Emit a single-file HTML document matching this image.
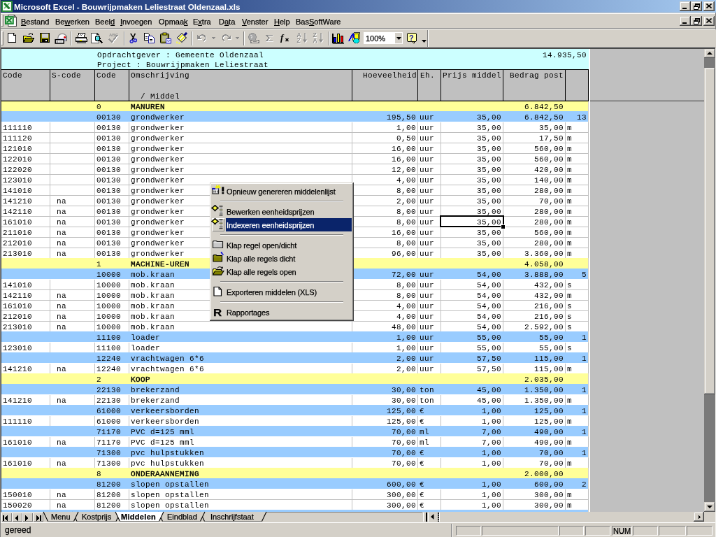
<!DOCTYPE html><html><head><meta charset="utf-8"><style>
*{margin:0;padding:0;box-sizing:border-box}
html,body{width:716px;height:537px;overflow:hidden;background:#d4d0c8}
#s{position:absolute;left:0;top:0;width:1024px;height:768px;transform:scale(0.69921875);transform-origin:0 0;will-change:transform;overflow:hidden;background:#d4d0c8;font-family:"Liberation Sans",sans-serif;font-size:11px;color:#000}
.a{position:absolute;display:block}
.m{position:absolute;font-family:"Liberation Mono",monospace;font-size:11px;letter-spacing:0.4px;white-space:pre;line-height:15px}
.r{text-align:right}
.u{position:absolute;font-family:"Liberation Sans",sans-serif;font-size:11px;white-space:pre;line-height:13px;-webkit-text-stroke:0.25px currentColor}
.bt{position:absolute;background:#d4d0c8;box-shadow:inset -1px -1px #404040,inset 1px 1px #fff,inset -2px -2px #808080}
.bt2{position:absolute;background:#d4d0c8;box-shadow:inset -1px -1px #404040,inset 1px 1px #d4d0c8,inset -2px -2px #808080,inset 2px 2px #fff}
u{text-decoration:underline;text-underline-offset:1px}
</style></head><body><div id="s">
<div class="a" style="left:0px;top:0px;width:1024px;height:18px;background:linear-gradient(to right,#0a246a,#a6caf0);"></div>
<div class="u" style="left:20px;top:3px;color:#fff;font-weight:bold;font-size:11.7px;-webkit-text-stroke:0">Microsoft Excel - Bouwrijpmaken Leliestraat Oldenzaal.xls</div>
<svg class="a" style="left:2px;top:1px;shape-rendering:auto" width="16" height="16" viewBox="0 0 16 16" shape-rendering="crispEdges"><rect x="0" y="0" width="16" height="16" fill="#2a8a3a"/><rect x="2" y="2" width="12" height="12" fill="#f2faf2"/><path d="M11.5 3.5L4 11" stroke="#5cb86a" stroke-width="1.6"/><path d="M4 3.5L11.5 11.5" stroke="#1c7a2c" stroke-width="3.2"/><rect x="3" y="12" width="10" height="1.2" fill="#ffffff"/></svg>
<div class="bt2" style="left:972px;top:2px;width:16px;height:14px"></div>
<div class="a" style="left:976px;top:11px;width:6px;height:2px;background:#000;"></div>
<div class="bt2" style="left:988px;top:2px;width:16px;height:14px"></div>
<svg class="a" style="left:992px;top:5px;" width="9" height="9" viewBox="0 0 9 9" shape-rendering="crispEdges"><path d="M2.5 3V0.5H8.5V5.5H6" fill="none" stroke="#000"/><rect x="2" y="1" width="7" height="1" fill="#000"/><rect x="0.5" y="3.5" width="6" height="5" fill="#fff" stroke="#000"/><rect x="0" y="4" width="7" height="1" fill="#000"/></svg>
<div class="bt2" style="left:1006px;top:2px;width:16px;height:14px"></div>
<svg class="a" style="left:1010px;top:5px;shape-rendering:auto" width="8" height="7" viewBox="0 0 8 7" shape-rendering="crispEdges"><path d="M0.5 0.5L7.5 6.5M7.5 0.5L0.5 6.5" stroke="#000" stroke-width="1.6"/></svg>
<div class="a" style="left:0px;top:0px;width:1px;height:768px;background:#808080;"></div>
<div class="a" style="left:1023px;top:18px;width:1px;height:24px;background:#808080;"></div>
<div class="a" style="left:1px;top:18px;width:1022px;height:1px;background:#d4d0c8;"></div>
<div class="a" style="left:1px;top:19px;width:1022px;height:1px;background:#ffffff;"></div>
<div class="a" style="left:2px;top:21px;width:1px;height:17px;background:#ffffff;"></div>
<div class="a" style="left:3px;top:21px;width:2px;height:17px;background:#d4d0c8;"></div>
<div class="a" style="left:4px;top:21px;width:1px;height:17px;background:#808080;"></div>
<div class="a" style="left:2px;top:37px;width:3px;height:1px;background:#808080;"></div>
<svg class="a" style="left:7px;top:21px;shape-rendering:auto" width="17" height="17" viewBox="0 0 16 16" shape-rendering="crispEdges"><path d="M4.5 0.5H12.5L15.5 3.5V15.5H4.5Z" fill="#fff" stroke="#404040"/><path d="M12.5 0.5V3.5H15.5" fill="none" stroke="#404040"/><rect x="0.5" y="2.5" width="11" height="10" fill="#2ea043" stroke="#178030"/><rect x="2" y="4" width="8" height="7" fill="#d8f0d8"/><path d="M2.5 4.5L9 10.5M9 4.5L2.5 10.5" stroke="#178030" stroke-width="2"/></svg>
<div class="u" style="left:30px;top:25px"><u>B</u>estand</div>
<div class="u" style="left:79px;top:25px">Be<u>w</u>erken</div>
<div class="u" style="left:136px;top:25px">Beel<u>d</u></div>
<div class="u" style="left:172px;top:25px"><u>I</u>nvoegen</div>
<div class="u" style="left:227px;top:25px">Opmaa<u>k</u></div>
<div class="u" style="left:276px;top:25px">E<u>x</u>tra</div>
<div class="u" style="left:313px;top:25px">D<u>a</u>ta</div>
<div class="u" style="left:346px;top:25px"><u>V</u>enster</div>
<div class="u" style="left:392px;top:25px"><u>H</u>elp</div>
<div class="u" style="left:423px;top:25px">Bas<u>S</u>oftWare</div>
<div class="bt2" style="left:972px;top:23px;width:16px;height:14px"></div>
<div class="a" style="left:976px;top:32px;width:6px;height:2px;background:#000;"></div>
<div class="bt2" style="left:988px;top:23px;width:16px;height:14px"></div>
<svg class="a" style="left:992px;top:26px;" width="9" height="9" viewBox="0 0 9 9" shape-rendering="crispEdges"><path d="M2.5 3V0.5H8.5V5.5H6" fill="none" stroke="#000"/><rect x="2" y="1" width="7" height="1" fill="#000"/><rect x="0.5" y="3.5" width="6" height="5" fill="#fff" stroke="#000"/><rect x="0" y="4" width="7" height="1" fill="#000"/></svg>
<div class="bt2" style="left:1006px;top:23px;width:16px;height:14px"></div>
<svg class="a" style="left:1010px;top:26px;shape-rendering:auto" width="8" height="7" viewBox="0 0 8 7" shape-rendering="crispEdges"><path d="M0.5 0.5L7.5 6.5M7.5 0.5L0.5 6.5" stroke="#000" stroke-width="1.6"/></svg>
<div class="a" style="left:1px;top:40px;width:1022px;height:1px;background:#808080;"></div>
<div class="a" style="left:1px;top:41px;width:1022px;height:1px;background:#ffffff;"></div>
<div class="a" style="left:2px;top:44px;width:1px;height:21px;background:#ffffff;"></div>
<div class="a" style="left:4px;top:44px;width:1px;height:21px;background:#808080;"></div>
<div class="a" style="left:2px;top:64px;width:3px;height:1px;background:#808080;"></div>
<div class="a" style="left:2px;top:44px;width:3px;height:1px;background:#ffffff;"></div>
<div class="a" style="left:101px;top:45px;width:1px;height:20px;background:#808080;"></div>
<div class="a" style="left:102px;top:45px;width:1px;height:20px;background:#ffffff;"></div>
<div class="a" style="left:177px;top:45px;width:1px;height:20px;background:#808080;"></div>
<div class="a" style="left:178px;top:45px;width:1px;height:20px;background:#ffffff;"></div>
<div class="a" style="left:274px;top:45px;width:1px;height:20px;background:#808080;"></div>
<div class="a" style="left:275px;top:45px;width:1px;height:20px;background:#ffffff;"></div>
<div class="a" style="left:348px;top:45px;width:1px;height:20px;background:#808080;"></div>
<div class="a" style="left:349px;top:45px;width:1px;height:20px;background:#ffffff;"></div>
<div class="a" style="left:470px;top:45px;width:1px;height:20px;background:#808080;"></div>
<div class="a" style="left:471px;top:45px;width:1px;height:20px;background:#ffffff;"></div>
<svg class="a" style="left:9px;top:46px;" width="16" height="16" viewBox="0 0 16 16" shape-rendering="crispEdges"><path d="M2.5 1.5H10.5L13.5 4.5V14.5H2.5Z" fill="#fff" stroke="#000"/><path d="M10.5 1.5V4.5H13.5" fill="none" stroke="#000"/></svg>
<svg class="a" style="left:32px;top:46px;" width="17" height="16" viewBox="0 0 17 16" shape-rendering="crispEdges"><path d="M1.5 5.5H5.5L6.5 6.5H12.5V14.5H1.5Z" fill="#ffff00" stroke="#000"/><path d="M1.5 14.5L4.5 8.5H16.5L13.5 14.5Z" fill="#808000" stroke="#000"/><path d="M9 3.5Q11 0.5 13.5 3" fill="none" stroke="#000"/><path d="M12 2H15V5Z" fill="#000"/></svg>
<svg class="a" style="left:56px;top:46px;" width="16" height="16" viewBox="0 0 16 16" shape-rendering="crispEdges"><rect x="1.5" y="1.5" width="13" height="13" fill="#808000" stroke="#000"/><rect x="3.5" y="2" width="9" height="5.5" fill="#d0d0d0"/><rect x="3.5" y="9.5" width="9" height="5" fill="#000"/><rect x="9" y="11" width="2" height="2" fill="#fff"/></svg>
<svg class="a" style="left:78px;top:46px;shape-rendering:auto" width="18" height="17" viewBox="0 0 18 17" shape-rendering="crispEdges"><path d="M5 7.5A6.2 6.2 0 0 1 17.2 7.5V12.5H5Z" fill="#f8f8f8" stroke="#888" stroke-width="1.1"/><path d="M5.6 8.8H16.6V12H5.6Z" fill="#c8c8f4"/><path d="M16.8 5V13" stroke="#606060" stroke-width="1.2"/><circle cx="14.6" cy="7.3" r="1.5" fill="#e00000"/><rect x="1.2" y="10.7" width="12" height="5.3" fill="#fff" stroke="#000" stroke-width="1.5"/><rect x="3" y="12.3" width="1.4" height="2.6" fill="#505050"/><rect x="5.5" y="12.5" width="6" height="2.2" fill="#d0d0d0"/></svg>
<svg class="a" style="left:107px;top:46px;" width="18" height="17" viewBox="0 0 18 17" shape-rendering="crispEdges"><path d="M5.5 1.5H14.5L13.5 7.5H4.5Z" fill="#fff" stroke="#000"/><path d="M7 5L9 3M9 5L11 3" stroke="#404040"/><path d="M1.5 7.5H15Q17 7.5 17 10V13.5H1.5Z" fill="#a8a8a8" stroke="#000"/><rect x="2" y="9.8" width="14" height="1.3" fill="#fff"/><rect x="6.5" y="11.2" width="3" height="2" fill="#d8d800"/><rect x="2.5" y="13.5" width="13" height="2.5" fill="#686868"/></svg>
<svg class="a" style="left:130px;top:46px;" width="18" height="17" viewBox="0 0 18 17" shape-rendering="crispEdges"><path d="M0.5 1.5H9L11 3.5V15.5H0.5Z" fill="#fff" stroke="#505050"/><path d="M9 1.5V3.5H11" fill="none" stroke="#202020" stroke-width="1.5"/><circle cx="9.6" cy="8.8" r="3.4" fill="#48d8e0" stroke="#000" stroke-width="1.3"/><circle cx="8.6" cy="7.8" r="1" fill="#d0ffff"/><path d="M12 11.3L16.5 15.5" stroke="#000" stroke-width="2"/></svg>
<svg class="a" style="left:154px;top:46px;" width="17" height="17" viewBox="0 0 17 17" shape-rendering="crispEdges"><g transform="translate(1,1)"><path d="M2 10L6 14L14 4" fill="none" stroke="#fff" stroke-width="2"/></g><path d="M2 10L6 14L14 4" fill="none" stroke="#909090" stroke-width="2"/><text x="2" y="6" font-family="Liberation Sans" font-size="6" font-weight="bold" fill="#909090">ABC</text></svg>
<svg class="a" style="left:184px;top:46px;shape-rendering:auto" width="13" height="17" viewBox="0 0 13 17" shape-rendering="crispEdges"><path d="M2.8 1.8L8.4 10.6M9.4 1.8L4.6 11.6" stroke="#000" stroke-width="1.5" fill="none"/><circle cx="4.2" cy="13.2" r="2" fill="#c0c0f0" stroke="#2828c8" stroke-width="1.4"/><circle cx="9.4" cy="11.8" r="2" fill="#c0c0f0" stroke="#2828c8" stroke-width="1.4"/></svg>
<svg class="a" style="left:205px;top:46px;" width="17" height="16" viewBox="0 0 17 16" shape-rendering="crispEdges"><path d="M1.5 1.5H6.5L8.5 3.5V11.5H1.5Z" fill="#fff" stroke="#000"/><path d="M3 6H6M3 8H6" stroke="#000"/><path d="M7.5 5.5H12.5L15.5 8.5V15.5H7.5Z" fill="#fff" stroke="#1818a0"/><path d="M9 10H13M9 12H13" stroke="#000"/></svg>
<svg class="a" style="left:228px;top:46px;shape-rendering:auto" width="18" height="17" viewBox="0 0 18 17" shape-rendering="crispEdges"><rect x="1.5" y="2.5" width="12" height="13" rx="1" fill="#808020" stroke="#000"/><rect x="3.5" y="4.5" width="8" height="9" fill="#b8b890"/><rect x="5" y="1" width="5" height="3" fill="#d8d800" stroke="#000" stroke-width="0.8"/><path d="M9.5 9.5H16.5V16H9.5Z" fill="#e8e8ff" stroke="#2020c0"/><path d="M11 12L13 13.5L15.5 11" fill="none" stroke="#2020c0"/></svg>
<svg class="a" style="left:251px;top:46px;shape-rendering:auto" width="18" height="17" viewBox="0 0 18 17" shape-rendering="crispEdges"><g transform="rotate(45 9 8)"><rect x="7.5" y="-2" width="3" height="5" fill="#000080"/><rect x="4.5" y="3.5" width="9" height="9" fill="#f4f4f4" stroke="#202020"/><rect x="6.2" y="4.2" width="1.8" height="7.8" fill="#e8e800"/><rect x="9.8" y="4.2" width="1.8" height="7.8" fill="#e8e800"/></g><rect x="1" y="13.5" width="2.5" height="2.5" fill="#f0f060"/><rect x="4.5" y="14.5" width="2.5" height="2.5" fill="#f0f060"/></svg>
<svg class="a" style="left:281px;top:48px;" width="17" height="13" viewBox="0 0 17 13" shape-rendering="crispEdges"><g transform="translate(1,1)"><path d="M4 4Q9 0 12 4Q14 8 10 10" fill="none" stroke="#fff" stroke-width="1.6"/><path d="M1 2V8H7Z" fill="#fff"/></g><path d="M4 4Q9 0 12 4Q14 8 10 10" fill="none" stroke="#8a8a8a" stroke-width="1.6"/><path d="M1 2V8H7Z" fill="#8a8a8a"/></svg>
<svg class="a" style="left:302px;top:52px;" width="7" height="5" viewBox="0 0 7 5" shape-rendering="crispEdges"><path d="M0.5 1H6.5L3.5 4Z" fill="#8a8a8a"/></svg>
<svg class="a" style="left:315px;top:48px;" width="17" height="13" viewBox="0 0 17 13" shape-rendering="crispEdges"><g transform="translate(1,1)"><path d="M12 4Q7 0 4 4Q2 8 6 10" fill="none" stroke="#fff" stroke-width="1.6"/><path d="M15 2V8H9Z" fill="#fff"/></g><path d="M12 4Q7 0 4 4Q2 8 6 10" fill="none" stroke="#8a8a8a" stroke-width="1.6"/><path d="M15 2V8H9Z" fill="#8a8a8a"/></svg>
<svg class="a" style="left:336px;top:52px;" width="7" height="5" viewBox="0 0 7 5" shape-rendering="crispEdges"><path d="M0.5 1H6.5L3.5 4Z" fill="#8a8a8a"/></svg>
<svg class="a" style="left:353px;top:46px;" width="19" height="17" viewBox="0 0 19 17" shape-rendering="crispEdges"><circle cx="8" cy="7" r="5.5" fill="#a8a8a8" stroke="#909090"/><path d="M5 4L8 6L6 9" stroke="#d8d8d8" fill="none"/><rect x="5.5" y="11.5" width="12" height="4" rx="2" fill="#d4d0c8" stroke="#808080" stroke-width="1.5"/><path d="M9 13.5H14" stroke="#808080"/></svg>
<svg class="a" style="left:379px;top:49px;" width="14" height="12" viewBox="0 0 14 12" shape-rendering="crispEdges"><g transform="translate(1,1)"><path d="M11 1.5H2L6 5.5L2 9.5H11" fill="none" stroke="#fff" stroke-width="1.3"/></g><path d="M11 1.5H2L6 5.5L2 9.5H11" fill="none" stroke="#8a8a8a" stroke-width="1.3"/></svg>
<svg class="a" style="left:400px;top:47px;shape-rendering:auto" width="16" height="15" viewBox="0 0 16 15" shape-rendering="crispEdges"><text x="1" y="11.5" font-family="Liberation Serif" font-size="13" font-style="italic" font-weight="bold" fill="#000">f</text><path d="M8.5 8L12.5 12M12.5 8L8.5 12" stroke="#000" stroke-width="1.5"/></svg>
<svg class="a" style="left:424px;top:46px;shape-rendering:auto" width="17" height="17" viewBox="0 0 17 17" shape-rendering="crispEdges"><g transform="translate(1,1)" fill="#fff" stroke="#fff"><text x="0.5" y="7.5" font-family="Liberation Sans" font-size="8.5" font-weight="bold" stroke="none">A</text><text x="0.5" y="15.5" font-family="Liberation Sans" font-size="8.5" font-weight="bold" stroke="none">Z</text><path d="M12 1V12" stroke-width="1.3" fill="none"/><path d="M9 10.5H15L12 15Z" stroke="none"/></g><g fill="#8c8c8c" stroke="#8c8c8c"><text x="0.5" y="7.5" font-family="Liberation Sans" font-size="8.5" font-weight="bold" stroke="none">A</text><text x="0.5" y="15.5" font-family="Liberation Sans" font-size="8.5" font-weight="bold" stroke="none">Z</text><path d="M12 1V12" stroke-width="1.3" fill="none"/><path d="M9 10.5H15L12 15Z" stroke="none"/></g></svg>
<svg class="a" style="left:447px;top:46px;shape-rendering:auto" width="17" height="17" viewBox="0 0 17 17" shape-rendering="crispEdges"><g transform="translate(1,1)" fill="#fff" stroke="#fff"><text x="0.5" y="7.5" font-family="Liberation Sans" font-size="8.5" font-weight="bold" stroke="none">Z</text><text x="0.5" y="15.5" font-family="Liberation Sans" font-size="8.5" font-weight="bold" stroke="none">A</text><path d="M12 1V12" stroke-width="1.3" fill="none"/><path d="M9 10.5H15L12 15Z" stroke="none"/></g><g fill="#8c8c8c" stroke="#8c8c8c"><text x="0.5" y="7.5" font-family="Liberation Sans" font-size="8.5" font-weight="bold" stroke="none">Z</text><text x="0.5" y="15.5" font-family="Liberation Sans" font-size="8.5" font-weight="bold" stroke="none">A</text><path d="M12 1V12" stroke-width="1.3" fill="none"/><path d="M9 10.5H15L12 15Z" stroke="none"/></g></svg>
<svg class="a" style="left:475px;top:46px;" width="18" height="17" viewBox="0 0 18 17" shape-rendering="crispEdges"><rect x="2.5" y="7.5" width="3" height="7" fill="#0000ff" stroke="#000"/><rect x="7.5" y="2.5" width="3" height="12" fill="#ffff00" stroke="#000"/><rect x="12.5" y="5.5" width="3" height="9" fill="#ff0000" stroke="#000"/><path d="M1 1.5V15.5H17" fill="none" stroke="#000" stroke-width="1.4"/><rect x="1" y="15" width="16" height="1.5" fill="#404040"/></svg>
<svg class="a" style="left:498px;top:46px;" width="18" height="17" viewBox="0 0 18 17" shape-rendering="crispEdges"><path d="M6.5 2.5L8.5 0.5H16.5V9.5L14.5 11.5H6.5Z" fill="#ffff00" stroke="#404040"/><path d="M6.5 2.5H14.5V11.5M14.5 2.5L16.5 0.5" fill="none" stroke="#404040"/><path d="M1 13L6 3H8L9 13" fill="none" stroke="#0000e0" stroke-width="2"/><ellipse cx="11.5" cy="12.5" rx="4" ry="3.5" fill="#00e8e8" stroke="#006060"/></svg>
<svg class="a" style="left:581px;top:46px;" width="17" height="17" viewBox="0 0 17 17" shape-rendering="crispEdges"><rect x="1.5" y="1.5" width="13" height="12" rx="2" fill="#ffffa0" stroke="#000"/><path d="M9 13.5L11 16L12 13.5" fill="#ffffa0" stroke="#000"/><text x="4" y="12" font-family="Liberation Sans" font-size="11" font-weight="bold" fill="#1010a0">?</text></svg>
<div class="a" style="left:520px;top:46px;width:56px;height:17px;background:#ffffff;"></div>
<div class="a" style="left:565px;top:47px;width:10px;height:15px;background:#d4d0c8;"></div>
<svg class="a" style="left:567px;top:53px;shape-rendering:auto" width="7" height="4" viewBox="0 0 7 4" shape-rendering="crispEdges"><path d="M0 0H7L3.5 4Z" fill="#000"/></svg>
<div class="u" style="left:523px;top:48px;font-size:11px;line-height:14px">100%</div>
<svg class="a" style="left:603px;top:57px;shape-rendering:auto" width="7" height="4" viewBox="0 0 7 4" shape-rendering="crispEdges"><path d="M0 0H7L3.5 4Z" fill="#000"/></svg>
<div class="a" style="left:611px;top:43px;width:1px;height:24px;background:#808080;"></div>
<div class="a" style="left:612px;top:43px;width:1px;height:24px;background:#ffffff;"></div>
<div class="a" style="left:1px;top:67px;width:1022px;height:1px;background:#808080;"></div>
<div class="a" style="left:1px;top:68px;width:1022px;height:1px;background:#808080;"></div>
<div class="a" style="left:1px;top:69px;width:1022px;height:1px;background:#404040;"></div>
<div class="a" style="left:1px;top:69px;width:1px;height:663px;background:#404040;"></div>
<div class="a" style="left:844px;top:70px;width:163px;height:662px;background:#c0c0c0;"></div>
<div class="a" style="left:2px;top:70px;width:840px;height:29px;background:#ccffff;"></div>
<div class="m" style="left:139px;top:72px">Opdrachtgever : Gemeente Oldenzaal</div>
<div class="m" style="left:139px;top:86px">Project : Bouwrijpmaken Leliestraat</div>
<div class="m r" style="left:600px;width:239px;top:72px">14.935,50</div>
<div class="a" style="left:2px;top:99px;width:840px;height:45px;background:#c0c0c0;"></div>
<div class="a" style="left:2px;top:99px;width:840px;height:1px;background:#000;"></div>
<div class="m" style="left:4px;top:101px">Code</div>
<div class="m" style="left:74px;top:101px">S-code</div>
<div class="m" style="left:138px;top:101px">Code</div>
<div class="m" style="left:187px;top:101px">Omschrijving</div>
<div class="m" style="left:601px;top:101px">Eh.</div>
<div class="m" style="left:633px;top:101px">Prijs middel</div>
<div class="m" style="left:729px;top:101px">Bedrag post</div>
<div class="m r" style="left:504px;width:92px;top:101px">Hoeveelheid</div>
<div class="m" style="left:187px;top:131px">  / Middel</div>
<div class="a" style="left:2px;top:144px;width:839px;height:15px;background:#ffff99;"></div>
<div class="a" style="left:2px;top:159px;width:839px;height:15px;background:#99ccff;"></div>
<div class="a" style="left:2px;top:174px;width:839px;height:15px;background:#ffffff;"></div>
<div class="a" style="left:2px;top:189px;width:839px;height:15px;background:#ffffff;"></div>
<div class="a" style="left:2px;top:204px;width:839px;height:15px;background:#ffffff;"></div>
<div class="a" style="left:2px;top:219px;width:839px;height:15px;background:#ffffff;"></div>
<div class="a" style="left:2px;top:234px;width:839px;height:15px;background:#ffffff;"></div>
<div class="a" style="left:2px;top:249px;width:839px;height:15px;background:#ffffff;"></div>
<div class="a" style="left:2px;top:264px;width:839px;height:15px;background:#ffffff;"></div>
<div class="a" style="left:2px;top:279px;width:839px;height:15px;background:#ffffff;"></div>
<div class="a" style="left:2px;top:294px;width:839px;height:15px;background:#ffffff;"></div>
<div class="a" style="left:2px;top:309px;width:839px;height:15px;background:#ffffff;"></div>
<div class="a" style="left:2px;top:324px;width:839px;height:15px;background:#ffffff;"></div>
<div class="a" style="left:2px;top:339px;width:839px;height:15px;background:#ffffff;"></div>
<div class="a" style="left:2px;top:354px;width:839px;height:15px;background:#ffffff;"></div>
<div class="a" style="left:2px;top:369px;width:839px;height:15px;background:#ffff99;"></div>
<div class="a" style="left:2px;top:384px;width:839px;height:15px;background:#99ccff;"></div>
<div class="a" style="left:2px;top:399px;width:839px;height:15px;background:#ffffff;"></div>
<div class="a" style="left:2px;top:414px;width:839px;height:15px;background:#ffffff;"></div>
<div class="a" style="left:2px;top:429px;width:839px;height:15px;background:#ffffff;"></div>
<div class="a" style="left:2px;top:444px;width:839px;height:15px;background:#ffffff;"></div>
<div class="a" style="left:2px;top:459px;width:839px;height:15px;background:#ffffff;"></div>
<div class="a" style="left:2px;top:474px;width:839px;height:15px;background:#99ccff;"></div>
<div class="a" style="left:2px;top:489px;width:839px;height:15px;background:#ffffff;"></div>
<div class="a" style="left:2px;top:504px;width:839px;height:15px;background:#99ccff;"></div>
<div class="a" style="left:2px;top:519px;width:839px;height:15px;background:#ffffff;"></div>
<div class="a" style="left:2px;top:534px;width:839px;height:15px;background:#ffff99;"></div>
<div class="a" style="left:2px;top:549px;width:839px;height:15px;background:#99ccff;"></div>
<div class="a" style="left:2px;top:564px;width:839px;height:15px;background:#ffffff;"></div>
<div class="a" style="left:2px;top:579px;width:839px;height:15px;background:#99ccff;"></div>
<div class="a" style="left:2px;top:594px;width:839px;height:15px;background:#ffffff;"></div>
<div class="a" style="left:2px;top:609px;width:839px;height:15px;background:#99ccff;"></div>
<div class="a" style="left:2px;top:624px;width:839px;height:15px;background:#ffffff;"></div>
<div class="a" style="left:2px;top:639px;width:839px;height:15px;background:#99ccff;"></div>
<div class="a" style="left:2px;top:654px;width:839px;height:15px;background:#ffffff;"></div>
<div class="a" style="left:2px;top:669px;width:839px;height:15px;background:#ffff99;"></div>
<div class="a" style="left:2px;top:684px;width:839px;height:15px;background:#99ccff;"></div>
<div class="a" style="left:2px;top:699px;width:839px;height:15px;background:#ffffff;"></div>
<div class="a" style="left:2px;top:714px;width:839px;height:15px;background:#ffffff;"></div>
<div class="a" style="left:2px;top:729px;width:839px;height:15px;background:#99ccff;"></div>
<div class="a" style="left:2px;top:189px;width:839px;height:1px;background:#c0c0c0;"></div>
<div class="a" style="left:71px;top:175px;width:1px;height:15px;background:#c0c0c0;"></div>
<div class="a" style="left:135px;top:175px;width:1px;height:15px;background:#c0c0c0;"></div>
<div class="a" style="left:184px;top:175px;width:1px;height:15px;background:#c0c0c0;"></div>
<div class="a" style="left:503px;top:175px;width:1px;height:15px;background:#c0c0c0;"></div>
<div class="a" style="left:597px;top:175px;width:1px;height:15px;background:#c0c0c0;"></div>
<div class="a" style="left:630px;top:175px;width:1px;height:15px;background:#c0c0c0;"></div>
<div class="a" style="left:719px;top:175px;width:1px;height:15px;background:#c0c0c0;"></div>
<div class="a" style="left:808px;top:175px;width:1px;height:15px;background:#c0c0c0;"></div>
<div class="a" style="left:841px;top:175px;width:1px;height:15px;background:#c0c0c0;"></div>
<div class="a" style="left:2px;top:204px;width:839px;height:1px;background:#c0c0c0;"></div>
<div class="a" style="left:71px;top:190px;width:1px;height:15px;background:#c0c0c0;"></div>
<div class="a" style="left:135px;top:190px;width:1px;height:15px;background:#c0c0c0;"></div>
<div class="a" style="left:184px;top:190px;width:1px;height:15px;background:#c0c0c0;"></div>
<div class="a" style="left:503px;top:190px;width:1px;height:15px;background:#c0c0c0;"></div>
<div class="a" style="left:597px;top:190px;width:1px;height:15px;background:#c0c0c0;"></div>
<div class="a" style="left:630px;top:190px;width:1px;height:15px;background:#c0c0c0;"></div>
<div class="a" style="left:719px;top:190px;width:1px;height:15px;background:#c0c0c0;"></div>
<div class="a" style="left:808px;top:190px;width:1px;height:15px;background:#c0c0c0;"></div>
<div class="a" style="left:841px;top:190px;width:1px;height:15px;background:#c0c0c0;"></div>
<div class="a" style="left:2px;top:219px;width:839px;height:1px;background:#c0c0c0;"></div>
<div class="a" style="left:71px;top:205px;width:1px;height:15px;background:#c0c0c0;"></div>
<div class="a" style="left:135px;top:205px;width:1px;height:15px;background:#c0c0c0;"></div>
<div class="a" style="left:184px;top:205px;width:1px;height:15px;background:#c0c0c0;"></div>
<div class="a" style="left:503px;top:205px;width:1px;height:15px;background:#c0c0c0;"></div>
<div class="a" style="left:597px;top:205px;width:1px;height:15px;background:#c0c0c0;"></div>
<div class="a" style="left:630px;top:205px;width:1px;height:15px;background:#c0c0c0;"></div>
<div class="a" style="left:719px;top:205px;width:1px;height:15px;background:#c0c0c0;"></div>
<div class="a" style="left:808px;top:205px;width:1px;height:15px;background:#c0c0c0;"></div>
<div class="a" style="left:841px;top:205px;width:1px;height:15px;background:#c0c0c0;"></div>
<div class="a" style="left:2px;top:234px;width:839px;height:1px;background:#c0c0c0;"></div>
<div class="a" style="left:71px;top:220px;width:1px;height:15px;background:#c0c0c0;"></div>
<div class="a" style="left:135px;top:220px;width:1px;height:15px;background:#c0c0c0;"></div>
<div class="a" style="left:184px;top:220px;width:1px;height:15px;background:#c0c0c0;"></div>
<div class="a" style="left:503px;top:220px;width:1px;height:15px;background:#c0c0c0;"></div>
<div class="a" style="left:597px;top:220px;width:1px;height:15px;background:#c0c0c0;"></div>
<div class="a" style="left:630px;top:220px;width:1px;height:15px;background:#c0c0c0;"></div>
<div class="a" style="left:719px;top:220px;width:1px;height:15px;background:#c0c0c0;"></div>
<div class="a" style="left:808px;top:220px;width:1px;height:15px;background:#c0c0c0;"></div>
<div class="a" style="left:841px;top:220px;width:1px;height:15px;background:#c0c0c0;"></div>
<div class="a" style="left:2px;top:249px;width:839px;height:1px;background:#c0c0c0;"></div>
<div class="a" style="left:71px;top:235px;width:1px;height:15px;background:#c0c0c0;"></div>
<div class="a" style="left:135px;top:235px;width:1px;height:15px;background:#c0c0c0;"></div>
<div class="a" style="left:184px;top:235px;width:1px;height:15px;background:#c0c0c0;"></div>
<div class="a" style="left:503px;top:235px;width:1px;height:15px;background:#c0c0c0;"></div>
<div class="a" style="left:597px;top:235px;width:1px;height:15px;background:#c0c0c0;"></div>
<div class="a" style="left:630px;top:235px;width:1px;height:15px;background:#c0c0c0;"></div>
<div class="a" style="left:719px;top:235px;width:1px;height:15px;background:#c0c0c0;"></div>
<div class="a" style="left:808px;top:235px;width:1px;height:15px;background:#c0c0c0;"></div>
<div class="a" style="left:841px;top:235px;width:1px;height:15px;background:#c0c0c0;"></div>
<div class="a" style="left:2px;top:264px;width:839px;height:1px;background:#c0c0c0;"></div>
<div class="a" style="left:71px;top:250px;width:1px;height:15px;background:#c0c0c0;"></div>
<div class="a" style="left:135px;top:250px;width:1px;height:15px;background:#c0c0c0;"></div>
<div class="a" style="left:184px;top:250px;width:1px;height:15px;background:#c0c0c0;"></div>
<div class="a" style="left:503px;top:250px;width:1px;height:15px;background:#c0c0c0;"></div>
<div class="a" style="left:597px;top:250px;width:1px;height:15px;background:#c0c0c0;"></div>
<div class="a" style="left:630px;top:250px;width:1px;height:15px;background:#c0c0c0;"></div>
<div class="a" style="left:719px;top:250px;width:1px;height:15px;background:#c0c0c0;"></div>
<div class="a" style="left:808px;top:250px;width:1px;height:15px;background:#c0c0c0;"></div>
<div class="a" style="left:841px;top:250px;width:1px;height:15px;background:#c0c0c0;"></div>
<div class="a" style="left:2px;top:279px;width:839px;height:1px;background:#c0c0c0;"></div>
<div class="a" style="left:71px;top:265px;width:1px;height:15px;background:#c0c0c0;"></div>
<div class="a" style="left:135px;top:265px;width:1px;height:15px;background:#c0c0c0;"></div>
<div class="a" style="left:184px;top:265px;width:1px;height:15px;background:#c0c0c0;"></div>
<div class="a" style="left:503px;top:265px;width:1px;height:15px;background:#c0c0c0;"></div>
<div class="a" style="left:597px;top:265px;width:1px;height:15px;background:#c0c0c0;"></div>
<div class="a" style="left:630px;top:265px;width:1px;height:15px;background:#c0c0c0;"></div>
<div class="a" style="left:719px;top:265px;width:1px;height:15px;background:#c0c0c0;"></div>
<div class="a" style="left:808px;top:265px;width:1px;height:15px;background:#c0c0c0;"></div>
<div class="a" style="left:841px;top:265px;width:1px;height:15px;background:#c0c0c0;"></div>
<div class="a" style="left:2px;top:294px;width:839px;height:1px;background:#c0c0c0;"></div>
<div class="a" style="left:71px;top:280px;width:1px;height:15px;background:#c0c0c0;"></div>
<div class="a" style="left:135px;top:280px;width:1px;height:15px;background:#c0c0c0;"></div>
<div class="a" style="left:184px;top:280px;width:1px;height:15px;background:#c0c0c0;"></div>
<div class="a" style="left:503px;top:280px;width:1px;height:15px;background:#c0c0c0;"></div>
<div class="a" style="left:597px;top:280px;width:1px;height:15px;background:#c0c0c0;"></div>
<div class="a" style="left:630px;top:280px;width:1px;height:15px;background:#c0c0c0;"></div>
<div class="a" style="left:719px;top:280px;width:1px;height:15px;background:#c0c0c0;"></div>
<div class="a" style="left:808px;top:280px;width:1px;height:15px;background:#c0c0c0;"></div>
<div class="a" style="left:841px;top:280px;width:1px;height:15px;background:#c0c0c0;"></div>
<div class="a" style="left:2px;top:309px;width:839px;height:1px;background:#c0c0c0;"></div>
<div class="a" style="left:71px;top:295px;width:1px;height:15px;background:#c0c0c0;"></div>
<div class="a" style="left:135px;top:295px;width:1px;height:15px;background:#c0c0c0;"></div>
<div class="a" style="left:184px;top:295px;width:1px;height:15px;background:#c0c0c0;"></div>
<div class="a" style="left:503px;top:295px;width:1px;height:15px;background:#c0c0c0;"></div>
<div class="a" style="left:597px;top:295px;width:1px;height:15px;background:#c0c0c0;"></div>
<div class="a" style="left:630px;top:295px;width:1px;height:15px;background:#c0c0c0;"></div>
<div class="a" style="left:719px;top:295px;width:1px;height:15px;background:#c0c0c0;"></div>
<div class="a" style="left:808px;top:295px;width:1px;height:15px;background:#c0c0c0;"></div>
<div class="a" style="left:841px;top:295px;width:1px;height:15px;background:#c0c0c0;"></div>
<div class="a" style="left:2px;top:324px;width:839px;height:1px;background:#c0c0c0;"></div>
<div class="a" style="left:71px;top:310px;width:1px;height:15px;background:#c0c0c0;"></div>
<div class="a" style="left:135px;top:310px;width:1px;height:15px;background:#c0c0c0;"></div>
<div class="a" style="left:184px;top:310px;width:1px;height:15px;background:#c0c0c0;"></div>
<div class="a" style="left:503px;top:310px;width:1px;height:15px;background:#c0c0c0;"></div>
<div class="a" style="left:597px;top:310px;width:1px;height:15px;background:#c0c0c0;"></div>
<div class="a" style="left:630px;top:310px;width:1px;height:15px;background:#c0c0c0;"></div>
<div class="a" style="left:719px;top:310px;width:1px;height:15px;background:#c0c0c0;"></div>
<div class="a" style="left:808px;top:310px;width:1px;height:15px;background:#c0c0c0;"></div>
<div class="a" style="left:841px;top:310px;width:1px;height:15px;background:#c0c0c0;"></div>
<div class="a" style="left:2px;top:339px;width:839px;height:1px;background:#c0c0c0;"></div>
<div class="a" style="left:71px;top:325px;width:1px;height:15px;background:#c0c0c0;"></div>
<div class="a" style="left:135px;top:325px;width:1px;height:15px;background:#c0c0c0;"></div>
<div class="a" style="left:184px;top:325px;width:1px;height:15px;background:#c0c0c0;"></div>
<div class="a" style="left:503px;top:325px;width:1px;height:15px;background:#c0c0c0;"></div>
<div class="a" style="left:597px;top:325px;width:1px;height:15px;background:#c0c0c0;"></div>
<div class="a" style="left:630px;top:325px;width:1px;height:15px;background:#c0c0c0;"></div>
<div class="a" style="left:719px;top:325px;width:1px;height:15px;background:#c0c0c0;"></div>
<div class="a" style="left:808px;top:325px;width:1px;height:15px;background:#c0c0c0;"></div>
<div class="a" style="left:841px;top:325px;width:1px;height:15px;background:#c0c0c0;"></div>
<div class="a" style="left:2px;top:354px;width:839px;height:1px;background:#c0c0c0;"></div>
<div class="a" style="left:71px;top:340px;width:1px;height:15px;background:#c0c0c0;"></div>
<div class="a" style="left:135px;top:340px;width:1px;height:15px;background:#c0c0c0;"></div>
<div class="a" style="left:184px;top:340px;width:1px;height:15px;background:#c0c0c0;"></div>
<div class="a" style="left:503px;top:340px;width:1px;height:15px;background:#c0c0c0;"></div>
<div class="a" style="left:597px;top:340px;width:1px;height:15px;background:#c0c0c0;"></div>
<div class="a" style="left:630px;top:340px;width:1px;height:15px;background:#c0c0c0;"></div>
<div class="a" style="left:719px;top:340px;width:1px;height:15px;background:#c0c0c0;"></div>
<div class="a" style="left:808px;top:340px;width:1px;height:15px;background:#c0c0c0;"></div>
<div class="a" style="left:841px;top:340px;width:1px;height:15px;background:#c0c0c0;"></div>
<div class="a" style="left:71px;top:355px;width:1px;height:14px;background:#c0c0c0;"></div>
<div class="a" style="left:135px;top:355px;width:1px;height:14px;background:#c0c0c0;"></div>
<div class="a" style="left:184px;top:355px;width:1px;height:14px;background:#c0c0c0;"></div>
<div class="a" style="left:503px;top:355px;width:1px;height:14px;background:#c0c0c0;"></div>
<div class="a" style="left:597px;top:355px;width:1px;height:14px;background:#c0c0c0;"></div>
<div class="a" style="left:630px;top:355px;width:1px;height:14px;background:#c0c0c0;"></div>
<div class="a" style="left:719px;top:355px;width:1px;height:14px;background:#c0c0c0;"></div>
<div class="a" style="left:808px;top:355px;width:1px;height:14px;background:#c0c0c0;"></div>
<div class="a" style="left:841px;top:355px;width:1px;height:14px;background:#c0c0c0;"></div>
<div class="a" style="left:2px;top:414px;width:839px;height:1px;background:#c0c0c0;"></div>
<div class="a" style="left:71px;top:400px;width:1px;height:15px;background:#c0c0c0;"></div>
<div class="a" style="left:135px;top:400px;width:1px;height:15px;background:#c0c0c0;"></div>
<div class="a" style="left:184px;top:400px;width:1px;height:15px;background:#c0c0c0;"></div>
<div class="a" style="left:503px;top:400px;width:1px;height:15px;background:#c0c0c0;"></div>
<div class="a" style="left:597px;top:400px;width:1px;height:15px;background:#c0c0c0;"></div>
<div class="a" style="left:630px;top:400px;width:1px;height:15px;background:#c0c0c0;"></div>
<div class="a" style="left:719px;top:400px;width:1px;height:15px;background:#c0c0c0;"></div>
<div class="a" style="left:808px;top:400px;width:1px;height:15px;background:#c0c0c0;"></div>
<div class="a" style="left:841px;top:400px;width:1px;height:15px;background:#c0c0c0;"></div>
<div class="a" style="left:2px;top:429px;width:839px;height:1px;background:#c0c0c0;"></div>
<div class="a" style="left:71px;top:415px;width:1px;height:15px;background:#c0c0c0;"></div>
<div class="a" style="left:135px;top:415px;width:1px;height:15px;background:#c0c0c0;"></div>
<div class="a" style="left:184px;top:415px;width:1px;height:15px;background:#c0c0c0;"></div>
<div class="a" style="left:503px;top:415px;width:1px;height:15px;background:#c0c0c0;"></div>
<div class="a" style="left:597px;top:415px;width:1px;height:15px;background:#c0c0c0;"></div>
<div class="a" style="left:630px;top:415px;width:1px;height:15px;background:#c0c0c0;"></div>
<div class="a" style="left:719px;top:415px;width:1px;height:15px;background:#c0c0c0;"></div>
<div class="a" style="left:808px;top:415px;width:1px;height:15px;background:#c0c0c0;"></div>
<div class="a" style="left:841px;top:415px;width:1px;height:15px;background:#c0c0c0;"></div>
<div class="a" style="left:2px;top:444px;width:839px;height:1px;background:#c0c0c0;"></div>
<div class="a" style="left:71px;top:430px;width:1px;height:15px;background:#c0c0c0;"></div>
<div class="a" style="left:135px;top:430px;width:1px;height:15px;background:#c0c0c0;"></div>
<div class="a" style="left:184px;top:430px;width:1px;height:15px;background:#c0c0c0;"></div>
<div class="a" style="left:503px;top:430px;width:1px;height:15px;background:#c0c0c0;"></div>
<div class="a" style="left:597px;top:430px;width:1px;height:15px;background:#c0c0c0;"></div>
<div class="a" style="left:630px;top:430px;width:1px;height:15px;background:#c0c0c0;"></div>
<div class="a" style="left:719px;top:430px;width:1px;height:15px;background:#c0c0c0;"></div>
<div class="a" style="left:808px;top:430px;width:1px;height:15px;background:#c0c0c0;"></div>
<div class="a" style="left:841px;top:430px;width:1px;height:15px;background:#c0c0c0;"></div>
<div class="a" style="left:2px;top:459px;width:839px;height:1px;background:#c0c0c0;"></div>
<div class="a" style="left:71px;top:445px;width:1px;height:15px;background:#c0c0c0;"></div>
<div class="a" style="left:135px;top:445px;width:1px;height:15px;background:#c0c0c0;"></div>
<div class="a" style="left:184px;top:445px;width:1px;height:15px;background:#c0c0c0;"></div>
<div class="a" style="left:503px;top:445px;width:1px;height:15px;background:#c0c0c0;"></div>
<div class="a" style="left:597px;top:445px;width:1px;height:15px;background:#c0c0c0;"></div>
<div class="a" style="left:630px;top:445px;width:1px;height:15px;background:#c0c0c0;"></div>
<div class="a" style="left:719px;top:445px;width:1px;height:15px;background:#c0c0c0;"></div>
<div class="a" style="left:808px;top:445px;width:1px;height:15px;background:#c0c0c0;"></div>
<div class="a" style="left:841px;top:445px;width:1px;height:15px;background:#c0c0c0;"></div>
<div class="a" style="left:71px;top:460px;width:1px;height:14px;background:#c0c0c0;"></div>
<div class="a" style="left:135px;top:460px;width:1px;height:14px;background:#c0c0c0;"></div>
<div class="a" style="left:184px;top:460px;width:1px;height:14px;background:#c0c0c0;"></div>
<div class="a" style="left:503px;top:460px;width:1px;height:14px;background:#c0c0c0;"></div>
<div class="a" style="left:597px;top:460px;width:1px;height:14px;background:#c0c0c0;"></div>
<div class="a" style="left:630px;top:460px;width:1px;height:14px;background:#c0c0c0;"></div>
<div class="a" style="left:719px;top:460px;width:1px;height:14px;background:#c0c0c0;"></div>
<div class="a" style="left:808px;top:460px;width:1px;height:14px;background:#c0c0c0;"></div>
<div class="a" style="left:841px;top:460px;width:1px;height:14px;background:#c0c0c0;"></div>
<div class="a" style="left:71px;top:490px;width:1px;height:14px;background:#c0c0c0;"></div>
<div class="a" style="left:135px;top:490px;width:1px;height:14px;background:#c0c0c0;"></div>
<div class="a" style="left:184px;top:490px;width:1px;height:14px;background:#c0c0c0;"></div>
<div class="a" style="left:503px;top:490px;width:1px;height:14px;background:#c0c0c0;"></div>
<div class="a" style="left:597px;top:490px;width:1px;height:14px;background:#c0c0c0;"></div>
<div class="a" style="left:630px;top:490px;width:1px;height:14px;background:#c0c0c0;"></div>
<div class="a" style="left:719px;top:490px;width:1px;height:14px;background:#c0c0c0;"></div>
<div class="a" style="left:808px;top:490px;width:1px;height:14px;background:#c0c0c0;"></div>
<div class="a" style="left:841px;top:490px;width:1px;height:14px;background:#c0c0c0;"></div>
<div class="a" style="left:71px;top:520px;width:1px;height:14px;background:#c0c0c0;"></div>
<div class="a" style="left:135px;top:520px;width:1px;height:14px;background:#c0c0c0;"></div>
<div class="a" style="left:184px;top:520px;width:1px;height:14px;background:#c0c0c0;"></div>
<div class="a" style="left:503px;top:520px;width:1px;height:14px;background:#c0c0c0;"></div>
<div class="a" style="left:597px;top:520px;width:1px;height:14px;background:#c0c0c0;"></div>
<div class="a" style="left:630px;top:520px;width:1px;height:14px;background:#c0c0c0;"></div>
<div class="a" style="left:719px;top:520px;width:1px;height:14px;background:#c0c0c0;"></div>
<div class="a" style="left:808px;top:520px;width:1px;height:14px;background:#c0c0c0;"></div>
<div class="a" style="left:841px;top:520px;width:1px;height:14px;background:#c0c0c0;"></div>
<div class="a" style="left:71px;top:565px;width:1px;height:14px;background:#c0c0c0;"></div>
<div class="a" style="left:135px;top:565px;width:1px;height:14px;background:#c0c0c0;"></div>
<div class="a" style="left:184px;top:565px;width:1px;height:14px;background:#c0c0c0;"></div>
<div class="a" style="left:503px;top:565px;width:1px;height:14px;background:#c0c0c0;"></div>
<div class="a" style="left:597px;top:565px;width:1px;height:14px;background:#c0c0c0;"></div>
<div class="a" style="left:630px;top:565px;width:1px;height:14px;background:#c0c0c0;"></div>
<div class="a" style="left:719px;top:565px;width:1px;height:14px;background:#c0c0c0;"></div>
<div class="a" style="left:808px;top:565px;width:1px;height:14px;background:#c0c0c0;"></div>
<div class="a" style="left:841px;top:565px;width:1px;height:14px;background:#c0c0c0;"></div>
<div class="a" style="left:71px;top:595px;width:1px;height:14px;background:#c0c0c0;"></div>
<div class="a" style="left:135px;top:595px;width:1px;height:14px;background:#c0c0c0;"></div>
<div class="a" style="left:184px;top:595px;width:1px;height:14px;background:#c0c0c0;"></div>
<div class="a" style="left:503px;top:595px;width:1px;height:14px;background:#c0c0c0;"></div>
<div class="a" style="left:597px;top:595px;width:1px;height:14px;background:#c0c0c0;"></div>
<div class="a" style="left:630px;top:595px;width:1px;height:14px;background:#c0c0c0;"></div>
<div class="a" style="left:719px;top:595px;width:1px;height:14px;background:#c0c0c0;"></div>
<div class="a" style="left:808px;top:595px;width:1px;height:14px;background:#c0c0c0;"></div>
<div class="a" style="left:841px;top:595px;width:1px;height:14px;background:#c0c0c0;"></div>
<div class="a" style="left:71px;top:625px;width:1px;height:14px;background:#c0c0c0;"></div>
<div class="a" style="left:135px;top:625px;width:1px;height:14px;background:#c0c0c0;"></div>
<div class="a" style="left:184px;top:625px;width:1px;height:14px;background:#c0c0c0;"></div>
<div class="a" style="left:503px;top:625px;width:1px;height:14px;background:#c0c0c0;"></div>
<div class="a" style="left:597px;top:625px;width:1px;height:14px;background:#c0c0c0;"></div>
<div class="a" style="left:630px;top:625px;width:1px;height:14px;background:#c0c0c0;"></div>
<div class="a" style="left:719px;top:625px;width:1px;height:14px;background:#c0c0c0;"></div>
<div class="a" style="left:808px;top:625px;width:1px;height:14px;background:#c0c0c0;"></div>
<div class="a" style="left:841px;top:625px;width:1px;height:14px;background:#c0c0c0;"></div>
<div class="a" style="left:71px;top:655px;width:1px;height:14px;background:#c0c0c0;"></div>
<div class="a" style="left:135px;top:655px;width:1px;height:14px;background:#c0c0c0;"></div>
<div class="a" style="left:184px;top:655px;width:1px;height:14px;background:#c0c0c0;"></div>
<div class="a" style="left:503px;top:655px;width:1px;height:14px;background:#c0c0c0;"></div>
<div class="a" style="left:597px;top:655px;width:1px;height:14px;background:#c0c0c0;"></div>
<div class="a" style="left:630px;top:655px;width:1px;height:14px;background:#c0c0c0;"></div>
<div class="a" style="left:719px;top:655px;width:1px;height:14px;background:#c0c0c0;"></div>
<div class="a" style="left:808px;top:655px;width:1px;height:14px;background:#c0c0c0;"></div>
<div class="a" style="left:841px;top:655px;width:1px;height:14px;background:#c0c0c0;"></div>
<div class="a" style="left:2px;top:714px;width:839px;height:1px;background:#c0c0c0;"></div>
<div class="a" style="left:71px;top:700px;width:1px;height:15px;background:#c0c0c0;"></div>
<div class="a" style="left:135px;top:700px;width:1px;height:15px;background:#c0c0c0;"></div>
<div class="a" style="left:184px;top:700px;width:1px;height:15px;background:#c0c0c0;"></div>
<div class="a" style="left:503px;top:700px;width:1px;height:15px;background:#c0c0c0;"></div>
<div class="a" style="left:597px;top:700px;width:1px;height:15px;background:#c0c0c0;"></div>
<div class="a" style="left:630px;top:700px;width:1px;height:15px;background:#c0c0c0;"></div>
<div class="a" style="left:719px;top:700px;width:1px;height:15px;background:#c0c0c0;"></div>
<div class="a" style="left:808px;top:700px;width:1px;height:15px;background:#c0c0c0;"></div>
<div class="a" style="left:841px;top:700px;width:1px;height:15px;background:#c0c0c0;"></div>
<div class="a" style="left:71px;top:715px;width:1px;height:14px;background:#c0c0c0;"></div>
<div class="a" style="left:135px;top:715px;width:1px;height:14px;background:#c0c0c0;"></div>
<div class="a" style="left:184px;top:715px;width:1px;height:14px;background:#c0c0c0;"></div>
<div class="a" style="left:503px;top:715px;width:1px;height:14px;background:#c0c0c0;"></div>
<div class="a" style="left:597px;top:715px;width:1px;height:14px;background:#c0c0c0;"></div>
<div class="a" style="left:630px;top:715px;width:1px;height:14px;background:#c0c0c0;"></div>
<div class="a" style="left:719px;top:715px;width:1px;height:14px;background:#c0c0c0;"></div>
<div class="a" style="left:808px;top:715px;width:1px;height:14px;background:#c0c0c0;"></div>
<div class="a" style="left:841px;top:715px;width:1px;height:14px;background:#c0c0c0;"></div>
<div class="m" style="left:138px;top:146px;">0</div>
<div class="m" style="left:187px;top:146px;-webkit-text-stroke:0.4px #000;">MANUREN</div>
<div class="m r" style="left:719px;width:87px;top:146px;">6.842,50</div>
<div class="m" style="left:138px;top:161px;">00130</div>
<div class="m" style="left:187px;top:161px;">grondwerker</div>
<div class="m r" style="left:503px;width:92px;top:161px;">195,50</div>
<div class="m" style="left:600px;top:161px;">uur</div>
<div class="m r" style="left:630px;width:87px;top:161px;">35,00</div>
<div class="m r" style="left:719px;width:87px;top:161px;">6.842,50</div>
<div class="m r" style="left:808px;width:31px;top:161px;">13</div>
<div class="m" style="left:4px;top:176px;">111110</div>
<div class="m" style="left:138px;top:176px;">00130</div>
<div class="m" style="left:187px;top:176px;">grondwerker</div>
<div class="m r" style="left:503px;width:92px;top:176px;">1,00</div>
<div class="m" style="left:600px;top:176px;">uur</div>
<div class="m r" style="left:630px;width:87px;top:176px;">35,00</div>
<div class="m r" style="left:719px;width:87px;top:176px;">35,00</div>
<div class="m" style="left:811px;top:176px;">m</div>
<div class="m" style="left:4px;top:191px;">111120</div>
<div class="m" style="left:138px;top:191px;">00130</div>
<div class="m" style="left:187px;top:191px;">grondwerker</div>
<div class="m r" style="left:503px;width:92px;top:191px;">0,50</div>
<div class="m" style="left:600px;top:191px;">uur</div>
<div class="m r" style="left:630px;width:87px;top:191px;">35,00</div>
<div class="m r" style="left:719px;width:87px;top:191px;">17,50</div>
<div class="m" style="left:811px;top:191px;">m</div>
<div class="m" style="left:4px;top:206px;">121010</div>
<div class="m" style="left:138px;top:206px;">00130</div>
<div class="m" style="left:187px;top:206px;">grondwerker</div>
<div class="m r" style="left:503px;width:92px;top:206px;">16,00</div>
<div class="m" style="left:600px;top:206px;">uur</div>
<div class="m r" style="left:630px;width:87px;top:206px;">35,00</div>
<div class="m r" style="left:719px;width:87px;top:206px;">560,00</div>
<div class="m" style="left:811px;top:206px;">m</div>
<div class="m" style="left:4px;top:221px;">122010</div>
<div class="m" style="left:138px;top:221px;">00130</div>
<div class="m" style="left:187px;top:221px;">grondwerker</div>
<div class="m r" style="left:503px;width:92px;top:221px;">16,00</div>
<div class="m" style="left:600px;top:221px;">uur</div>
<div class="m r" style="left:630px;width:87px;top:221px;">35,00</div>
<div class="m r" style="left:719px;width:87px;top:221px;">560,00</div>
<div class="m" style="left:811px;top:221px;">m</div>
<div class="m" style="left:4px;top:236px;">122020</div>
<div class="m" style="left:138px;top:236px;">00130</div>
<div class="m" style="left:187px;top:236px;">grondwerker</div>
<div class="m r" style="left:503px;width:92px;top:236px;">12,00</div>
<div class="m" style="left:600px;top:236px;">uur</div>
<div class="m r" style="left:630px;width:87px;top:236px;">35,00</div>
<div class="m r" style="left:719px;width:87px;top:236px;">420,00</div>
<div class="m" style="left:811px;top:236px;">m</div>
<div class="m" style="left:4px;top:251px;">123010</div>
<div class="m" style="left:138px;top:251px;">00130</div>
<div class="m" style="left:187px;top:251px;">grondwerker</div>
<div class="m r" style="left:503px;width:92px;top:251px;">4,00</div>
<div class="m" style="left:600px;top:251px;">uur</div>
<div class="m r" style="left:630px;width:87px;top:251px;">35,00</div>
<div class="m r" style="left:719px;width:87px;top:251px;">140,00</div>
<div class="m" style="left:811px;top:251px;">m</div>
<div class="m" style="left:4px;top:266px;">141010</div>
<div class="m" style="left:138px;top:266px;">00130</div>
<div class="m" style="left:187px;top:266px;">grondwerker</div>
<div class="m r" style="left:503px;width:92px;top:266px;">8,00</div>
<div class="m" style="left:600px;top:266px;">uur</div>
<div class="m r" style="left:630px;width:87px;top:266px;">35,00</div>
<div class="m r" style="left:719px;width:87px;top:266px;">280,00</div>
<div class="m" style="left:811px;top:266px;">m</div>
<div class="m" style="left:4px;top:281px;">141210</div>
<div class="m" style="left:81px;top:281px;">na</div>
<div class="m" style="left:138px;top:281px;">00130</div>
<div class="m" style="left:187px;top:281px;">grondwerker</div>
<div class="m r" style="left:503px;width:92px;top:281px;">2,00</div>
<div class="m" style="left:600px;top:281px;">uur</div>
<div class="m r" style="left:630px;width:87px;top:281px;">35,00</div>
<div class="m r" style="left:719px;width:87px;top:281px;">70,00</div>
<div class="m" style="left:811px;top:281px;">m</div>
<div class="m" style="left:4px;top:296px;">142110</div>
<div class="m" style="left:81px;top:296px;">na</div>
<div class="m" style="left:138px;top:296px;">00130</div>
<div class="m" style="left:187px;top:296px;">grondwerker</div>
<div class="m r" style="left:503px;width:92px;top:296px;">8,00</div>
<div class="m" style="left:600px;top:296px;">uur</div>
<div class="m r" style="left:630px;width:87px;top:296px;">35,00</div>
<div class="m r" style="left:719px;width:87px;top:296px;">280,00</div>
<div class="m" style="left:811px;top:296px;">m</div>
<div class="m" style="left:4px;top:311px;">161010</div>
<div class="m" style="left:81px;top:311px;">na</div>
<div class="m" style="left:138px;top:311px;">00130</div>
<div class="m" style="left:187px;top:311px;">grondwerker</div>
<div class="m r" style="left:503px;width:92px;top:311px;">8,00</div>
<div class="m" style="left:600px;top:311px;">uur</div>
<div class="m r" style="left:630px;width:87px;top:311px;">35,00</div>
<div class="m r" style="left:719px;width:87px;top:311px;">280,00</div>
<div class="m" style="left:811px;top:311px;">m</div>
<div class="m" style="left:4px;top:326px;">211010</div>
<div class="m" style="left:81px;top:326px;">na</div>
<div class="m" style="left:138px;top:326px;">00130</div>
<div class="m" style="left:187px;top:326px;">grondwerker</div>
<div class="m r" style="left:503px;width:92px;top:326px;">16,00</div>
<div class="m" style="left:600px;top:326px;">uur</div>
<div class="m r" style="left:630px;width:87px;top:326px;">35,00</div>
<div class="m r" style="left:719px;width:87px;top:326px;">560,00</div>
<div class="m" style="left:811px;top:326px;">m</div>
<div class="m" style="left:4px;top:341px;">212010</div>
<div class="m" style="left:81px;top:341px;">na</div>
<div class="m" style="left:138px;top:341px;">00130</div>
<div class="m" style="left:187px;top:341px;">grondwerker</div>
<div class="m r" style="left:503px;width:92px;top:341px;">8,00</div>
<div class="m" style="left:600px;top:341px;">uur</div>
<div class="m r" style="left:630px;width:87px;top:341px;">35,00</div>
<div class="m r" style="left:719px;width:87px;top:341px;">280,00</div>
<div class="m" style="left:811px;top:341px;">m</div>
<div class="m" style="left:4px;top:356px;">213010</div>
<div class="m" style="left:81px;top:356px;">na</div>
<div class="m" style="left:138px;top:356px;">00130</div>
<div class="m" style="left:187px;top:356px;">grondwerker</div>
<div class="m r" style="left:503px;width:92px;top:356px;">96,00</div>
<div class="m" style="left:600px;top:356px;">uur</div>
<div class="m r" style="left:630px;width:87px;top:356px;">35,00</div>
<div class="m r" style="left:719px;width:87px;top:356px;">3.360,00</div>
<div class="m" style="left:811px;top:356px;">m</div>
<div class="m" style="left:138px;top:371px;">1</div>
<div class="m" style="left:187px;top:371px;-webkit-text-stroke:0.4px #000;">MACHINE-UREN</div>
<div class="m r" style="left:719px;width:87px;top:371px;">4.058,00</div>
<div class="m" style="left:138px;top:386px;">10000</div>
<div class="m" style="left:187px;top:386px;">mob.kraan</div>
<div class="m r" style="left:503px;width:92px;top:386px;">72,00</div>
<div class="m" style="left:600px;top:386px;">uur</div>
<div class="m r" style="left:630px;width:87px;top:386px;">54,00</div>
<div class="m r" style="left:719px;width:87px;top:386px;">3.888,00</div>
<div class="m r" style="left:808px;width:31px;top:386px;">5</div>
<div class="m" style="left:4px;top:401px;">141010</div>
<div class="m" style="left:138px;top:401px;">10000</div>
<div class="m" style="left:187px;top:401px;">mob.kraan</div>
<div class="m r" style="left:503px;width:92px;top:401px;">8,00</div>
<div class="m" style="left:600px;top:401px;">uur</div>
<div class="m r" style="left:630px;width:87px;top:401px;">54,00</div>
<div class="m r" style="left:719px;width:87px;top:401px;">432,00</div>
<div class="m" style="left:811px;top:401px;">s</div>
<div class="m" style="left:4px;top:416px;">142110</div>
<div class="m" style="left:81px;top:416px;">na</div>
<div class="m" style="left:138px;top:416px;">10000</div>
<div class="m" style="left:187px;top:416px;">mob.kraan</div>
<div class="m r" style="left:503px;width:92px;top:416px;">8,00</div>
<div class="m" style="left:600px;top:416px;">uur</div>
<div class="m r" style="left:630px;width:87px;top:416px;">54,00</div>
<div class="m r" style="left:719px;width:87px;top:416px;">432,00</div>
<div class="m" style="left:811px;top:416px;">m</div>
<div class="m" style="left:4px;top:431px;">161010</div>
<div class="m" style="left:81px;top:431px;">na</div>
<div class="m" style="left:138px;top:431px;">10000</div>
<div class="m" style="left:187px;top:431px;">mob.kraan</div>
<div class="m r" style="left:503px;width:92px;top:431px;">4,00</div>
<div class="m" style="left:600px;top:431px;">uur</div>
<div class="m r" style="left:630px;width:87px;top:431px;">54,00</div>
<div class="m r" style="left:719px;width:87px;top:431px;">216,00</div>
<div class="m" style="left:811px;top:431px;">s</div>
<div class="m" style="left:4px;top:446px;">212010</div>
<div class="m" style="left:81px;top:446px;">na</div>
<div class="m" style="left:138px;top:446px;">10000</div>
<div class="m" style="left:187px;top:446px;">mob.kraan</div>
<div class="m r" style="left:503px;width:92px;top:446px;">4,00</div>
<div class="m" style="left:600px;top:446px;">uur</div>
<div class="m r" style="left:630px;width:87px;top:446px;">54,00</div>
<div class="m r" style="left:719px;width:87px;top:446px;">216,00</div>
<div class="m" style="left:811px;top:446px;">s</div>
<div class="m" style="left:4px;top:461px;">213010</div>
<div class="m" style="left:81px;top:461px;">na</div>
<div class="m" style="left:138px;top:461px;">10000</div>
<div class="m" style="left:187px;top:461px;">mob.kraan</div>
<div class="m r" style="left:503px;width:92px;top:461px;">48,00</div>
<div class="m" style="left:600px;top:461px;">uur</div>
<div class="m r" style="left:630px;width:87px;top:461px;">54,00</div>
<div class="m r" style="left:719px;width:87px;top:461px;">2.592,00</div>
<div class="m" style="left:811px;top:461px;">s</div>
<div class="m" style="left:138px;top:476px;">11100</div>
<div class="m" style="left:187px;top:476px;">loader</div>
<div class="m r" style="left:503px;width:92px;top:476px;">1,00</div>
<div class="m" style="left:600px;top:476px;">uur</div>
<div class="m r" style="left:630px;width:87px;top:476px;">55,00</div>
<div class="m r" style="left:719px;width:87px;top:476px;">55,00</div>
<div class="m r" style="left:808px;width:31px;top:476px;">1</div>
<div class="m" style="left:4px;top:491px;">123010</div>
<div class="m" style="left:138px;top:491px;">11100</div>
<div class="m" style="left:187px;top:491px;">loader</div>
<div class="m r" style="left:503px;width:92px;top:491px;">1,00</div>
<div class="m" style="left:600px;top:491px;">uur</div>
<div class="m r" style="left:630px;width:87px;top:491px;">55,00</div>
<div class="m r" style="left:719px;width:87px;top:491px;">55,00</div>
<div class="m" style="left:811px;top:491px;">s</div>
<div class="m" style="left:138px;top:506px;">12240</div>
<div class="m" style="left:187px;top:506px;">vrachtwagen 6*6</div>
<div class="m r" style="left:503px;width:92px;top:506px;">2,00</div>
<div class="m" style="left:600px;top:506px;">uur</div>
<div class="m r" style="left:630px;width:87px;top:506px;">57,50</div>
<div class="m r" style="left:719px;width:87px;top:506px;">115,00</div>
<div class="m r" style="left:808px;width:31px;top:506px;">1</div>
<div class="m" style="left:4px;top:521px;">141210</div>
<div class="m" style="left:81px;top:521px;">na</div>
<div class="m" style="left:138px;top:521px;">12240</div>
<div class="m" style="left:187px;top:521px;">vrachtwagen 6*6</div>
<div class="m r" style="left:503px;width:92px;top:521px;">2,00</div>
<div class="m" style="left:600px;top:521px;">uur</div>
<div class="m r" style="left:630px;width:87px;top:521px;">57,50</div>
<div class="m r" style="left:719px;width:87px;top:521px;">115,00</div>
<div class="m" style="left:811px;top:521px;">m</div>
<div class="m" style="left:138px;top:536px;">2</div>
<div class="m" style="left:187px;top:536px;-webkit-text-stroke:0.4px #000;">KOOP</div>
<div class="m r" style="left:719px;width:87px;top:536px;">2.035,00</div>
<div class="m" style="left:138px;top:551px;">22130</div>
<div class="m" style="left:187px;top:551px;">brekerzand</div>
<div class="m r" style="left:503px;width:92px;top:551px;">30,00</div>
<div class="m" style="left:600px;top:551px;">ton</div>
<div class="m r" style="left:630px;width:87px;top:551px;">45,00</div>
<div class="m r" style="left:719px;width:87px;top:551px;">1.350,00</div>
<div class="m r" style="left:808px;width:31px;top:551px;">1</div>
<div class="m" style="left:4px;top:566px;">141210</div>
<div class="m" style="left:81px;top:566px;">na</div>
<div class="m" style="left:138px;top:566px;">22130</div>
<div class="m" style="left:187px;top:566px;">brekerzand</div>
<div class="m r" style="left:503px;width:92px;top:566px;">30,00</div>
<div class="m" style="left:600px;top:566px;">ton</div>
<div class="m r" style="left:630px;width:87px;top:566px;">45,00</div>
<div class="m r" style="left:719px;width:87px;top:566px;">1.350,00</div>
<div class="m" style="left:811px;top:566px;">m</div>
<div class="m" style="left:138px;top:581px;">61000</div>
<div class="m" style="left:187px;top:581px;">verkeersborden</div>
<div class="m r" style="left:503px;width:92px;top:581px;">125,00</div>
<div class="m" style="left:600px;top:581px;">€</div>
<div class="m r" style="left:630px;width:87px;top:581px;">1,00</div>
<div class="m r" style="left:719px;width:87px;top:581px;">125,00</div>
<div class="m r" style="left:808px;width:31px;top:581px;">1</div>
<div class="m" style="left:4px;top:596px;">111110</div>
<div class="m" style="left:138px;top:596px;">61000</div>
<div class="m" style="left:187px;top:596px;">verkeersborden</div>
<div class="m r" style="left:503px;width:92px;top:596px;">125,00</div>
<div class="m" style="left:600px;top:596px;">€</div>
<div class="m r" style="left:630px;width:87px;top:596px;">1,00</div>
<div class="m r" style="left:719px;width:87px;top:596px;">125,00</div>
<div class="m" style="left:811px;top:596px;">m</div>
<div class="m" style="left:138px;top:611px;">71170</div>
<div class="m" style="left:187px;top:611px;">PVC d=125 mml</div>
<div class="m r" style="left:503px;width:92px;top:611px;">70,00</div>
<div class="m" style="left:600px;top:611px;">ml</div>
<div class="m r" style="left:630px;width:87px;top:611px;">7,00</div>
<div class="m r" style="left:719px;width:87px;top:611px;">490,00</div>
<div class="m r" style="left:808px;width:31px;top:611px;">1</div>
<div class="m" style="left:4px;top:626px;">161010</div>
<div class="m" style="left:81px;top:626px;">na</div>
<div class="m" style="left:138px;top:626px;">71170</div>
<div class="m" style="left:187px;top:626px;">PVC d=125 mml</div>
<div class="m r" style="left:503px;width:92px;top:626px;">70,00</div>
<div class="m" style="left:600px;top:626px;">ml</div>
<div class="m r" style="left:630px;width:87px;top:626px;">7,00</div>
<div class="m r" style="left:719px;width:87px;top:626px;">490,00</div>
<div class="m" style="left:811px;top:626px;">m</div>
<div class="m" style="left:138px;top:641px;">71300</div>
<div class="m" style="left:187px;top:641px;">pvc hulpstukken</div>
<div class="m r" style="left:503px;width:92px;top:641px;">70,00</div>
<div class="m" style="left:600px;top:641px;">€</div>
<div class="m r" style="left:630px;width:87px;top:641px;">1,00</div>
<div class="m r" style="left:719px;width:87px;top:641px;">70,00</div>
<div class="m r" style="left:808px;width:31px;top:641px;">1</div>
<div class="m" style="left:4px;top:656px;">161010</div>
<div class="m" style="left:81px;top:656px;">na</div>
<div class="m" style="left:138px;top:656px;">71300</div>
<div class="m" style="left:187px;top:656px;">pvc hulpstukken</div>
<div class="m r" style="left:503px;width:92px;top:656px;">70,00</div>
<div class="m" style="left:600px;top:656px;">€</div>
<div class="m r" style="left:630px;width:87px;top:656px;">1,00</div>
<div class="m r" style="left:719px;width:87px;top:656px;">70,00</div>
<div class="m" style="left:811px;top:656px;">m</div>
<div class="m" style="left:138px;top:671px;">8</div>
<div class="m" style="left:187px;top:671px;-webkit-text-stroke:0.4px #000;">ONDERAANNEMING</div>
<div class="m r" style="left:719px;width:87px;top:671px;">2.000,00</div>
<div class="m" style="left:138px;top:686px;">81200</div>
<div class="m" style="left:187px;top:686px;">slopen opstallen</div>
<div class="m r" style="left:503px;width:92px;top:686px;">600,00</div>
<div class="m" style="left:600px;top:686px;">€</div>
<div class="m r" style="left:630px;width:87px;top:686px;">1,00</div>
<div class="m r" style="left:719px;width:87px;top:686px;">600,00</div>
<div class="m r" style="left:808px;width:31px;top:686px;">2</div>
<div class="m" style="left:4px;top:701px;">150010</div>
<div class="m" style="left:81px;top:701px;">na</div>
<div class="m" style="left:138px;top:701px;">81200</div>
<div class="m" style="left:187px;top:701px;">slopen opstallen</div>
<div class="m r" style="left:503px;width:92px;top:701px;">300,00</div>
<div class="m" style="left:600px;top:701px;">€</div>
<div class="m r" style="left:630px;width:87px;top:701px;">1,00</div>
<div class="m r" style="left:719px;width:87px;top:701px;">300,00</div>
<div class="m" style="left:811px;top:701px;">m</div>
<div class="m" style="left:4px;top:716px;">150020</div>
<div class="m" style="left:81px;top:716px;">na</div>
<div class="m" style="left:138px;top:716px;">81200</div>
<div class="m" style="left:187px;top:716px;">slopen opstallen</div>
<div class="m r" style="left:503px;width:92px;top:716px;">300,00</div>
<div class="m" style="left:600px;top:716px;">€</div>
<div class="m r" style="left:630px;width:87px;top:716px;">1,00</div>
<div class="m r" style="left:719px;width:87px;top:716px;">300,00</div>
<div class="m" style="left:811px;top:716px;">m</div>
<div class="a" style="left:2px;top:143px;width:840px;height:1px;background:#909090;"></div>
<div class="a" style="left:2px;top:144px;width:840px;height:1px;background:#000;"></div>
<div class="a" style="left:844px;top:143px;width:163px;height:1px;background:#a0a0a0;"></div>
<div class="a" style="left:844px;top:144px;width:163px;height:1px;background:#606060;"></div>
<div class="a" style="left:71px;top:99px;width:1px;height:46px;background:#000;"></div>
<div class="a" style="left:135px;top:99px;width:1px;height:46px;background:#000;"></div>
<div class="a" style="left:184px;top:99px;width:1px;height:46px;background:#000;"></div>
<div class="a" style="left:503px;top:99px;width:1px;height:46px;background:#000;"></div>
<div class="a" style="left:597px;top:99px;width:1px;height:46px;background:#000;"></div>
<div class="a" style="left:630px;top:99px;width:1px;height:46px;background:#000;"></div>
<div class="a" style="left:719px;top:99px;width:1px;height:46px;background:#000;"></div>
<div class="a" style="left:808px;top:99px;width:1px;height:46px;background:#000;"></div>
<div class="a" style="left:841px;top:99px;width:1px;height:46px;background:#000;"></div>
<div class="a" style="left:842px;top:70px;width:2px;height:662px;background:#ffffff;"></div>
<div class="a" style="left:629px;top:308px;width:92px;height:17px;border:2px solid #000"></div>
<div class="a" style="left:716px;top:321px;width:7px;height:7px;background:#000;border:1px solid #fff"></div>
<div class="a" style="left:1007px;top:70px;width:17px;height:662px;background:#d4d0c8;"></div>
<div style="position:absolute;background:#d4d0c8;box-shadow:inset -1px -1px #5a5a5a,inset 1px 1px #d4d0c8,inset -2px -2px #a0a0a0,inset 2px 2px #fff;left:1007px;top:70px;width:16px;height:13px"></div>
<svg class="a" style="left:1011px;top:74px;shape-rendering:auto" width="8" height="4" viewBox="0 0 8 4" shape-rendering="crispEdges"><path d="M0 4H8L4 0Z" fill="#000"/></svg>
<div class="a" style="left:1007px;top:83px;width:16px;height:14px;background:#7a7a7a;"></div>
<div style="position:absolute;background:#d4d0c8;box-shadow:inset -1px -1px #5a5a5a,inset 1px 1px #d4d0c8,inset -2px -2px #a0a0a0,inset 2px 2px #fff;left:1007px;top:97px;width:16px;height:467px"></div>
<div class="a" style="left:1007px;top:564px;width:16px;height:154px;background:#7a7a7a;"></div>
<div style="position:absolute;background:#d4d0c8;box-shadow:inset -1px -1px #5a5a5a,inset 1px 1px #d4d0c8,inset -2px -2px #a0a0a0,inset 2px 2px #fff;left:1007px;top:718px;width:16px;height:14px"></div>
<svg class="a" style="left:1011px;top:723px;shape-rendering:auto" width="8" height="4" viewBox="0 0 8 4" shape-rendering="crispEdges"><path d="M0 0H8L4 4Z" fill="#000"/></svg>
<div class="a" style="left:1023px;top:69px;width:1px;height:699px;background:#f4f4f0;"></div>
<div class="a" style="left:1px;top:732px;width:1006px;height:14px;background:#d4d0c8;"></div>
<div class="a" style="left:2px;top:733px;width:15px;height:13px;box-shadow:inset 1px 1px #fff,inset -1px -1px #808080"></div>
<div class="a" style="left:17px;top:733px;width:15px;height:13px;box-shadow:inset 1px 1px #fff,inset -1px -1px #808080"></div>
<div class="a" style="left:32px;top:733px;width:15px;height:13px;box-shadow:inset 1px 1px #fff,inset -1px -1px #808080"></div>
<div class="a" style="left:47px;top:733px;width:15px;height:13px;box-shadow:inset 1px 1px #fff,inset -1px -1px #808080"></div>
<svg class="a" style="left:3px;top:737px;" width="9" height="8" viewBox="0 0 9 8" shape-rendering="crispEdges"><rect x="1" y="0" width="1.6" height="8" fill="#000"/><path d="M8 0V8L3 4Z" fill="#000"/></svg>
<svg class="a" style="left:21px;top:737px;" width="6" height="8" viewBox="0 0 6 8" shape-rendering="crispEdges"><path d="M5 0V8L0.5 4Z" fill="#000"/></svg>
<svg class="a" style="left:35px;top:737px;" width="6" height="8" viewBox="0 0 6 8" shape-rendering="crispEdges"><path d="M1 0V8L5.5 4Z" fill="#000"/></svg>
<svg class="a" style="left:51px;top:737px;" width="9" height="8" viewBox="0 0 9 8" shape-rendering="crispEdges"><rect x="6.4" y="0" width="1.6" height="8" fill="#000"/><path d="M1 0V8L6 4Z" fill="#000"/></svg>
<div class="a" style="left:62px;top:732px;width:550px;height:1px;background:#808080;"></div>
<svg class="a" style="left:0;top:0" width="620" height="768" viewBox="0 0 620 768"><path d="M286 732L292.5 745.5H374.5L381 732Z" fill="#d4d0c8"/><path d="M292.5 745.5H374.5" stroke="#808080" fill="none"/><path d="M286 732L292.5 745.5M374.5 745.5L381 732" stroke="#000" fill="none" stroke-width="1.1"/><path d="M226 732L232.5 745.5H286.5L293 732Z" fill="#d4d0c8"/><path d="M232.5 745.5H286.5" stroke="#808080" fill="none"/><path d="M226 732L232.5 745.5M286.5 745.5L293 732" stroke="#000" fill="none" stroke-width="1.1"/><path d="M103.5 732L110.0 745.5H166.0L172.5 732Z" fill="#d4d0c8"/><path d="M110.0 745.5H166.0" stroke="#808080" fill="none"/><path d="M103.5 732L110.0 745.5M166.0 745.5L172.5 732" stroke="#000" fill="none" stroke-width="1.1"/><path d="M62 732L68.5 745.5H105.5L112 732Z" fill="#d4d0c8"/><path d="M68.5 745.5H105.5" stroke="#808080" fill="none"/><path d="M62 732L68.5 745.5M105.5 745.5L112 732" stroke="#000" fill="none" stroke-width="1.1"/><path d="M165 732L171.5 745.5H227.5L234 732Z" fill="#fff"/><path d="M171.5 745.5H227.5" stroke="#808080" fill="none"/><path d="M165 732L171.5 745.5M227.5 745.5L234 732" stroke="#000" fill="none" stroke-width="1.1"/></svg>
<div class="u" style="left:73px;top:733px;">Menu</div>
<div class="u" style="left:117px;top:733px;">Kostprijs</div>
<div class="u" style="left:173px;top:733px;font-weight:bold;letter-spacing:0.3px;">Middelen</div>
<div class="u" style="left:239px;top:733px;">Eindblad</div>
<div class="u" style="left:301px;top:733px;">Inschrijfstaat</div>
<div class="a" style="left:604px;top:732px;width:24px;height:14px;background:#d4d0c8;"></div>
<div class="a" style="left:605px;top:733px;width:1px;height:13px;background:#ffffff;"></div>
<div class="a" style="left:609px;top:733px;width:2px;height:13px;background:#000;"></div>
<div class="a" style="left:612px;top:733px;width:1px;height:13px;background:#ffffff;"></div>
<svg class="a" style="left:616px;top:735px;shape-rendering:auto" width="5" height="8" viewBox="0 0 5 8" shape-rendering="crispEdges"><path d="M4.5 0V8L0 4Z" fill="#000"/></svg>
<div class="a" style="left:626px;top:733px;width:2px;height:13px;background:repeating-linear-gradient(#202020 0 2px,#909090 2px 3px)"></div>
<div class="a" style="left:628px;top:733px;width:1px;height:13px;background:#ffffff;"></div>
<div class="a" style="left:629px;top:732px;width:363px;height:14px;background:#d4d0c8;"></div>
<div class="bt2" style="left:992px;top:732px;width:15px;height:14px"></div>
<svg class="a" style="left:998px;top:736px;" width="5" height="7" viewBox="0 0 5 7" shape-rendering="crispEdges"><path d="M0.5 0V7L4.5 3.5Z" fill="#000"/></svg>
<div class="a" style="left:1px;top:746px;width:1022px;height:1px;background:#d4d0c8;"></div>
<div class="a" style="left:1px;top:747px;width:1022px;height:1px;background:#ffffff;"></div>
<div class="u" style="left:7px;top:751px;font-size:12px;line-height:14px">gereed</div>
<div class="a" style="left:645px;top:749px;width:1px;height:19px;background:#808080;"></div>
<div class="a" style="left:646px;top:749px;width:1px;height:19px;background:#ffffff;"></div>
<div class="a" style="left:652px;top:752px;width:36px;height:14px;border:1px solid;border-color:#808080 #fff #fff #808080"></div>
<div class="a" style="left:689px;top:752px;width:110px;height:14px;border:1px solid;border-color:#808080 #fff #fff #808080"></div>
<div class="a" style="left:800px;top:752px;width:35px;height:14px;border:1px solid;border-color:#808080 #fff #fff #808080"></div>
<div class="a" style="left:837px;top:752px;width:36px;height:14px;border:1px solid;border-color:#808080 #fff #fff #808080"></div>
<div class="a" style="left:875px;top:752px;width:29px;height:14px;border:1px solid;border-color:#808080 #fff #fff #808080"></div>
<div class="a" style="left:905px;top:752px;width:36px;height:14px;border:1px solid;border-color:#808080 #fff #fff #808080"></div>
<div class="a" style="left:942px;top:752px;width:39px;height:14px;border:1px solid;border-color:#808080 #fff #fff #808080"></div>
<div class="a" style="left:982px;top:752px;width:37px;height:14px;border:1px solid;border-color:#808080 #fff #fff #808080"></div>
<div class="u" style="left:877px;top:753px">NUM</div>
<div class="bt2" style="left:300px;top:261px;width:206px;height:198px"></div>
<svg class="a" style="left:302px;top:264px;shape-rendering:auto" width="20" height="19" viewBox="0 0 20 19" shape-rendering="crispEdges"><rect x="2" y="5.5" width="8.5" height="7.5" fill="#f8f8f8" stroke="#202020" stroke-width="1.2"/><rect x="1.5" y="5" width="4.5" height="2" fill="#1010c0"/><rect x="6" y="5" width="4.5" height="2" fill="#9090e0"/><path d="M4 8.5V11.5M6.3 8.5V11.5M8.6 8.5V11.5" stroke="#303030" stroke-width="1.1"/><path d="M6.5 5.5L8 2L9.5 4.5L11 1.8L11.8 4.5L13.5 4" fill="none" stroke="#f0f000" stroke-width="1.8"/><rect x="15.3" y="3.3" width="3" height="6.5" fill="#000"/><rect x="15.3" y="11" width="3" height="2.3" fill="#000"/></svg>
<div class="u" style="left:324px;top:268px;color:#000;letter-spacing:-0.15px">Opnieuw genereren middelenlijst</div>
<div class="a" style="left:315px;top:287px;width:176px;height:1px;background:#808080;"></div>
<div class="a" style="left:315px;top:288px;width:176px;height:1px;background:#ffffff;"></div>
<svg class="a" style="left:302px;top:293px;shape-rendering:auto" width="20" height="19" viewBox="0 0 20 19" shape-rendering="crispEdges"><path d="M5.5 0.6L7.4 2.6L10.2 4.5L7.4 6.4L5.5 8.6L3.6 6.4L0.8 4.5L3.6 2.6Z" fill="#ffff40" stroke="#000" stroke-width="1.4"/><rect x="11.5" y="1.3" width="5" height="1.3" fill="#202020"/><rect x="13" y="3" width="3" height="12" fill="#b0b0b0"/><rect x="11.5" y="6.5" width="5" height="1.3" fill="#707040"/><rect x="12" y="11" width="4.5" height="2.5" fill="#909090"/><rect x="11.5" y="14" width="5" height="1.5" fill="#404040"/></svg>
<div class="u" style="left:324px;top:297px;color:#000;letter-spacing:-0.15px">Bewerken eenheidsprijzen</div>
<div class="a" style="left:323px;top:312px;width:180px;height:19px;background:#0a246a;"></div>
<div class="a" style="left:303px;top:312px;width:18px;height:19px;box-shadow:inset 1px 1px #fff,inset -1px -1px #808080"></div>
<svg class="a" style="left:302px;top:312px;shape-rendering:auto" width="20" height="19" viewBox="0 0 20 19" shape-rendering="crispEdges"><path d="M5.5 0.6L7.4 2.6L10.2 4.5L7.4 6.4L5.5 8.6L3.6 6.4L0.8 4.5L3.6 2.6Z" fill="#ffff40" stroke="#000" stroke-width="1.4"/><rect x="11.5" y="1.3" width="5" height="1.3" fill="#202020"/><rect x="13" y="3" width="3" height="12" fill="#b0b0b0"/><rect x="11.5" y="6.5" width="5" height="1.3" fill="#707040"/><rect x="12" y="11" width="4.5" height="2.5" fill="#909090"/><rect x="11.5" y="14" width="5" height="1.5" fill="#404040"/></svg>
<div class="u" style="left:324px;top:316px;color:#fff;letter-spacing:-0.15px">Indexeren eenheidsprijzen</div>
<div class="a" style="left:315px;top:335px;width:176px;height:1px;background:#808080;"></div>
<div class="a" style="left:315px;top:336px;width:176px;height:1px;background:#ffffff;"></div>
<svg class="a" style="left:302px;top:341px;shape-rendering:auto" width="20" height="19" viewBox="0 0 20 19" shape-rendering="crispEdges"><path d="M2.5 4.5L3.5 3.5H7.5L8.5 4.5H16.5V13.5H2.5Z" fill="#c8c8c8" stroke="#202020" stroke-width="1.2"/><path d="M3.5 5.8H15.5" stroke="#f0f0f0"/></svg>
<div class="u" style="left:324px;top:345px;color:#000;letter-spacing:-0.15px">Klap regel open/dicht</div>
<svg class="a" style="left:302px;top:360px;shape-rendering:auto" width="20" height="19" viewBox="0 0 20 19" shape-rendering="crispEdges"><path d="M3 5.5L4 4.5H7L8 5.5H15.5V14H3Z" fill="#808000" stroke="#000" stroke-width="1.2"/><path d="M3.5 7.5H15" stroke="#a0a020"/><path d="M14 1L17.5 4.5" stroke="#0000e0" stroke-width="1.4"/><path d="M13.5 0.5H16V3Z" fill="#0000e0"/></svg>
<div class="u" style="left:324px;top:364px;color:#000;letter-spacing:-0.15px">Klap alle regels dicht</div>
<svg class="a" style="left:302px;top:379px;shape-rendering:auto" width="20" height="19" viewBox="0 0 20 19" shape-rendering="crispEdges"><path d="M2.5 6.5L3.5 5.5H6.5L7.5 6.5H14.5V14H2.5Z" fill="#ffff40" stroke="#000" stroke-width="1.1"/><path d="M2.5 14L5.5 8.5H18L14.5 14Z" fill="#808000" stroke="#000" stroke-width="1.1"/><path d="M8.5 4.5Q11 1.5 14 3" stroke="#000" fill="none"/><circle cx="15.5" cy="4" r="1.4" fill="#000"/></svg>
<div class="u" style="left:324px;top:383px;color:#000;letter-spacing:-0.15px">Klap alle regels open</div>
<div class="a" style="left:315px;top:402px;width:176px;height:1px;background:#808080;"></div>
<div class="a" style="left:315px;top:403px;width:176px;height:1px;background:#ffffff;"></div>
<svg class="a" style="left:302px;top:408px;shape-rendering:auto" width="20" height="19" viewBox="0 0 20 19" shape-rendering="crispEdges"><path d="M4 2.5H11L14.5 6V15H4Z" fill="#fff" stroke="#000" stroke-width="1.2"/><path d="M11 2.5V6H14.5" fill="none" stroke="#000"/></svg>
<div class="u" style="left:324px;top:412px;color:#000;letter-spacing:-0.15px">Exporteren middelen (XLS)</div>
<div class="a" style="left:315px;top:431px;width:176px;height:1px;background:#808080;"></div>
<div class="a" style="left:315px;top:432px;width:176px;height:1px;background:#ffffff;"></div>
<div class="u" style="left:305px;top:439px;font-weight:bold;font-size:15px;line-height:15px;transform:scaleX(1.12);transform-origin:0 0">R</div>
<div class="u" style="left:324px;top:441px;color:#000;letter-spacing:-0.15px">Rapportages</div>
</div></body></html>
